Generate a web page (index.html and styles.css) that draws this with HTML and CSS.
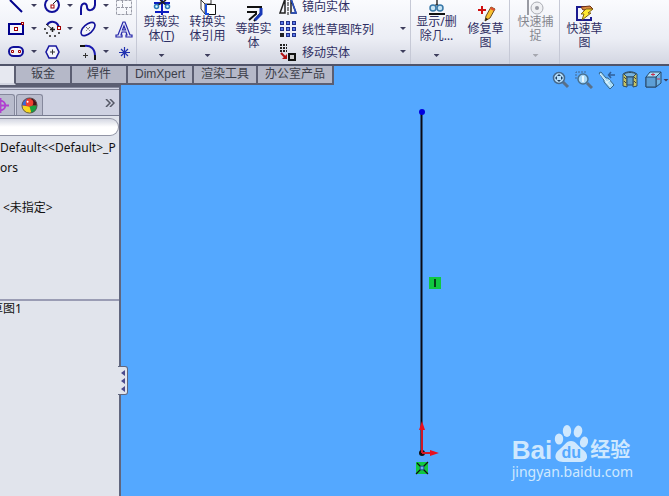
FILE: index.html
```html
<!DOCTYPE html>
<html lang="zh-CN">
<head>
    <meta charset="UTF-8">
    <meta name="viewport" content="width=device-width, initial-scale=1.0">
    <title>草图1</title>
    <link rel="stylesheet" href="styles.css">
</head>
<body>

    <!-- Sketch ribbon -->
    <header class="ribbon">
        <div class="group entities">
            <button class="tool" aria-label="Line"><svg viewBox="0 0 18 18"><path d="M3 3L15 15" stroke="#00008b" stroke-width="2"/></svg><i class="arrow"></i></button>
            <button class="tool" aria-label="Circle"><svg viewBox="0 0 18 18"><circle cx="9" cy="8" r="7" fill="none" stroke="#10109a" stroke-width="2"/><path d="M10 7L14 3" stroke="#222"/><rect x="8" y="8" width="3" height="3" fill="#fff" stroke="#a00000"/></svg><i class="arrow"></i></button>
            <button class="tool" aria-label="Spline"><svg viewBox="0 0 18 18"><path d="M2 18V12C2 5 8 5 8 10S15 14 16 8V1" fill="none" stroke="#10109a" stroke-width="2"/></svg><i class="arrow"></i></button>
            <button class="tool" aria-label="Plane"><svg viewBox="0 0 18 18"><path d="M1.500 3.500H16.500V17.500H1.500ZM2 10.500H16M7.500 3V10M11.500 10V17" fill="none" stroke="#9a9ca8" stroke-dasharray="3 1"/></svg></button>

            <button class="tool" aria-label="Rectangle"><svg viewBox="0 0 18 18"><rect x="2" y="4" width="14" height="10" fill="#f4f5fb" stroke="#00008b" stroke-width="2"/><rect x="7.500" y="7.500" width="3" height="3" fill="#fff" stroke="#a00000"/><rect x="14.500" y="2.500" width="2" height="2" fill="#fff" stroke="#a00000"/></svg><i class="arrow"></i></button>
            <button class="tool" aria-label="Arc"><svg viewBox="0 0 18 18"><path d="M4 5C7 0 15 1 16 8" fill="none" stroke="#10109a" stroke-width="2"/><path d="M3 4L9 9" stroke="#222"/><path d="M2 8V10M3 13H5M6 16H8M11 16H13M15 13H17M7 9.500H12M9.500 7V12" stroke="#222" stroke-width="1.500"/><rect x="14.500" y="6.500" width="3" height="3" fill="#fff" stroke="#a00000"/></svg><i class="arrow"></i></button>
            <button class="tool" aria-label="Ellipse"><svg viewBox="0 0 18 18"><ellipse cx="9" cy="9" rx="8.500" ry="4.500" transform="rotate(-42 9 9)" fill="#f4f5fb" stroke="#10109a" stroke-width="1.600"/><path d="M7 7L11 11M11 7L7 11" stroke="#333" stroke-dasharray="1 1"/></svg><i class="arrow"></i></button>
            <button class="tool" aria-label="Text"><svg viewBox="0 0 18 18"><path d="M8 2H10L15 15H17V17H11V15H12L11 12H7L6 15H7V17H1V15H3ZM9 6L7.500 10H10.500Z" fill="#e4e8f8" stroke="#2424a8" stroke-width="1.200" fill-rule="evenodd"/></svg></button>

            <button class="tool" aria-label="Slot"><svg viewBox="0 0 18 18"><rect x="2" y="4" width="14" height="9" rx="4.500" fill="#f4f5fb" stroke="#10109a" stroke-width="2"/><path d="M4.500 7.500h2v2h-2zM11.500 7.500h2v2h-2z" fill="#fff" stroke="#a00000"/></svg><i class="arrow"></i></button>
            <button class="tool" aria-label="Polygon"><svg viewBox="0 0 18 18"><path d="M6 3H13L16 9L13 15H6L3 9Z" fill="#f4f5fb" stroke="#1a1aa0" stroke-width="1.600"/><path d="M7 9H12M9.500 6.500V11.500" stroke="#333"/></svg></button>
            <button class="tool" aria-label="Fillet"><svg viewBox="0 0 18 18"><path d="M5 3C12 2 16 6 16 13" fill="none" stroke="#1a1ab0" stroke-width="2"/><path d="M1 3H6M16 12V17" stroke="#111" stroke-width="2"/><path d="M4 12.500H9M6.500 10V15" stroke="#333"/></svg><i class="arrow"></i></button>
            <button class="tool" aria-label="Point"><svg viewBox="0 0 18 18"><path d="M9.500 4V15M4 9.500H15M6 6L13 13M13 6L6 13" stroke="#2030b0" stroke-width="1.200"/></svg></button>
        </div>

        <div class="group plain">
            <button class="large">
                <svg class="short" viewBox="0 0 22 15"><path d="M3 3H19M4 12H18M11 0V15" stroke="#0a1ac0" stroke-width="2"/><path d="M7 5L15 0M16 6L9 0" stroke="#222" stroke-width="1.500"/><circle cx="5.500" cy="6.500" r="2" fill="#dff" stroke="#2878b8" stroke-width="1.500"/><circle cx="16.500" cy="6.500" r="2" fill="#dff" stroke="#2878b8" stroke-width="1.500"/></svg>
                <span>剪裁实<br>体(<u>T</u>)</span><i class="arrow"></i>
            </button>
            <button class="large">
                <svg class="short" viewBox="0 0 22 15"><path d="M4 0V9L8 14V4L4 0M8 4H14V0" fill="#fff" stroke="#333"/><path d="M8.500 4.500H18.500V14.500H8.500Z" fill="#fff" stroke="#111"/><path d="M9 4V14H12" fill="none" stroke="#1a50e0" stroke-width="2"/></svg>
                <span>转换实<br>体引用</span><i class="arrow"></i>
            </button>
            <button class="large">
                <svg class="tall" viewBox="0 0 22 22"><path d="M4 7H18V13L11 21" fill="none" stroke="#111" stroke-width="2"/><path d="M4 12H13V14L6 20" fill="none" stroke="#111" stroke-width="2"/><path d="M18 8V14L12 20" fill="none" stroke="#1838b8" stroke-width="3"/></svg>
                <span>等距实<br>体</span>
            </button>
        </div>

        <div class="group list">
            <button class="row"><svg viewBox="0 0 18 18"><path d="M6 2L1 16H6ZM12 2L17 16H12Z" fill="#f4f5fb" stroke="#222" stroke-width="1.500"/><path d="M12 2L17 16H12" fill="none" stroke="#2850c8" stroke-width="1.500"/><path d="M9 0V18" stroke="#111" stroke-dasharray="4 1"/></svg><span>镜向实体</span></button>
            <button class="row"><svg viewBox="0 0 18 18"><path d="M1 1h4v4H1zM7 1h4v4H7zM13 1h4v4h-4zM1 7h4v4H1zM7 7h4v4H7zM13 7h4v4h-4zM7 13h4v4H7zM13 13h4v4h-4z" fill="#20308c"/><path d="M1 13h4v4H1z" fill="#222"/><path d="M2 2h2v2H2zM8 2h2v2H8zM14 2h2v2h-2zM2 8h2v2H2zM8 8h2v2H8zM14 8h2v2h-2zM8 14h2v2H8zM14 14h2v2h-2z" fill="#5878e8"/></svg><span>线性草图阵列</span><i class="arrow"></i></button>
            <button class="row"><svg viewBox="0 0 18 18"><path d="M1 2H8M1 5H8M1 8H8" stroke="#222" stroke-width="2" stroke-dasharray="2 1"/><rect x="10" y="11" width="6" height="6" fill="#ccc" stroke="#111" stroke-width="2"/><path d="M2 10L6 14" stroke="#b01010" stroke-width="2"/><path d="M8 11V16H3Z" fill="#b01010"/></svg><span>移动实体</span><i class="arrow"></i></button>
        </div>

        <div class="group spaced">
            <button class="large">
                <svg class="short" viewBox="0 0 22 15"><path d="M11 0V4L15 11M11 4L7 8" fill="none" stroke="#333" stroke-width="1.500"/><circle cx="7" cy="8" r="3" fill="#c8e4f4" stroke="#3878a8" stroke-width="1.500"/><circle cx="14" cy="8" r="3" fill="#c8e4f4" stroke="#3878a8" stroke-width="1.500"/><path d="M3 14H19" stroke="#111" stroke-width="2"/></svg>
                <span>显示/删<br>除几…</span><i class="arrow"></i>
            </button>
            <button class="large">
                <svg class="tall" viewBox="0 0 22 22"><path d="M3 10H11M7 6V14" stroke="#d01010" stroke-width="2"/><path d="M10 21L11 16L16 7L20 9L15 18Z" fill="#f8c030" stroke="#6a4a20"/><path d="M16 7L20 9L19 11L15 9Z" fill="#e05030"/><path d="M10 21L11 18L13 19Z" fill="#111"/></svg>
                <span>修复草<br>图</span>
            </button>
        </div>

        <div class="group spaced">
            <button class="large" disabled>
                <svg class="short" viewBox="0 0 22 15"><path d="M3 0V15" stroke="#999ba3" stroke-width="2"/><circle cx="12" cy="8" r="6" fill="#f0f1f4" stroke="#aaacb3"/><circle cx="12" cy="8" r="2" fill="#999ba3"/></svg>
                <span>快速捕<br>捉</span><i class="arrow"></i>
            </button>
        </div>

        <div class="group plain">
            <button class="large">
                <svg class="tall" viewBox="0 0 22 22"><path d="M11 7H3V20H17V17" fill="none" stroke="#1a1a90" stroke-width="2"/><path d="M7 7L16 6L19 9L9 10Z" fill="#d88840" stroke="#703010"/><path d="M12 9H19L14 13H17L8 20L10 14H7Z" fill="#ffe830" stroke="#806010"/></svg>
                <span>快速草<br>图</span>
            </button>
        </div>
    </header>

    <nav class="tabs">
        <a class="tab current" href="#" aria-label="Sketch"></a>
        <a class="tab" href="#">钣金</a>
        <a class="tab" href="#">焊件</a>
        <a class="tab" href="#">DimXpert</a>
        <a class="tab" href="#">渲染工具</a>
        <a class="tab" href="#">办公室产品</a>

        <!-- Heads-up view tools -->
        <div class="view-tools">
            <button aria-label="Zoom to fit"><svg viewBox="0 0 18 18"><path d="M11 11L16 16" stroke="#5a7088" stroke-width="3"/><circle cx="7" cy="7" r="5.500" fill="#b8e0fc" stroke="#46698c" stroke-width="1.500"/><path d="M7 3L9 5H5ZM7 11L9 9H5ZM3 7L5 5V9ZM11 7L9 5V9Z" fill="#1d3d60"/></svg></button>
            <button aria-label="Zoom to area"><svg viewBox="0 0 18 18"><path d="M1 8V1H12" fill="none" stroke="#46698c" stroke-dasharray="2 1"/><path d="M12 12L17 17" stroke="#5a7088" stroke-width="3"/><circle cx="8" cy="8" r="5" fill="#a8d8f8" stroke="#47708f" stroke-width="1.500"/><path d="M8 5V11" stroke="#e8f8ff" stroke-width="2"/></svg></button>
            <button aria-label="Previous view"><svg viewBox="0 0 18 18"><path d="M1 2L3 1L8 7L10 7L16 14L12 18L6 11V9Z" fill="#a8dcf8" stroke="#356488"/><path d="M8 12L12 9M2 3L12 15" stroke="#e8f8ff"/><path d="M11 4H17M13 1L10.500 4L13 7" fill="none" stroke="#315f98" stroke-width="1.500"/></svg></button>
            <button aria-label="Section view"><svg viewBox="0 0 18 18"><path d="M2 3C6 0 12 0 16 3V15L12 16V6H6V16L2 15Z" fill="#c8c460" stroke="#284868"/><path d="M3 3C6 1 12 1 15 3L12 6H6Z" fill="#78b4e0" stroke="#284868"/><path d="M6 6H12V14H6Z" fill="#5c9ccc" stroke="#284868"/><path d="M3 6L5 8M3 10L5 12M13 6L15 8M13 10L15 12" stroke="#444"/></svg></button>
            <button aria-label="View orientation"><svg viewBox="0 0 18 18"><path d="M2 6L6 1H17L12 6V16H2Z" fill="#a8dcf8" stroke="#284868"/><path d="M12 6L17 1V12L12 16Z" fill="#70b4e4" stroke="#284868"/><path d="M2 6H12V16H2Z" fill="#5d9fd6" stroke="#284868"/><path d="M7 3.500H11M9 2V5M13 8H16" stroke="#c83050"/></svg></button>
            <i class="arrow"></i>
        </div>
    </nav>

    <main class="workspace">
        <aside class="panel">
            <div class="panel-tabs">
                <button class="panel-tab first" aria-label="DimXpert manager"><svg viewBox="0 0 18 18"><circle cx="9" cy="9" r="5" fill="none" stroke="#b040d0" stroke-width="2"/><path d="M0 9H18M9 1V17" stroke="#b040d0" stroke-width="2"/></svg></button>
                <button class="panel-tab" aria-label="Display manager"><svg viewBox="0 0 18 18"><circle cx="9" cy="9" r="8" fill="#e02020"/><path d="M1 9A8 8 0 0 1 6 2L9 9Z" fill="#3868d8"/><path d="M9 9L11 1A8 8 0 0 1 17 9Z" fill="#4a1018"/><path d="M17 9A8 8 0 0 1 11 17L8 9Z" fill="#18a040"/><path d="M1 9A8 8 0 0 0 11 17L9 10Z" fill="#f8d820"/><circle cx="9" cy="6" r="4" fill="#f04030"/><circle cx="7" cy="5" r="1" fill="#fff"/><circle cx="9" cy="9" r="8" fill="none" stroke="#555"/></svg></button>
                <button class="more" aria-label="More"><svg viewBox="0 0 10 8"><path d="M1 0L5 4L1 8M5 0L9 4L5 8" fill="none" stroke="#555866" stroke-width="1.500"/></svg></button>
            </div>
            <input class="filter" type="text" aria-label="Filter">
            <ul class="tree">
                <li>Default&lt;&lt;Default&gt;_P</li>
                <li>ors</li>
                <li></li>
                <li class="material">&lt;未指定&gt;</li>
            </ul>
            <div class="history"><span>草图1</span></div>
            <button class="handle" aria-label="Collapse panel"><svg viewBox="0 0 4 24"><path d="M4 1V7L0 4ZM4 9V15L0 12ZM4 17V23L0 20Z" fill="#4b4b8c"/></svg></button>
        </aside>

        <section class="canvas">
            <svg class="sketch" viewBox="0 0 50 380">
                <path d="M20.500 16V357" stroke="#0a0a14" stroke-width="2"/>
                <circle cx="21" cy="16" r="3" fill="#0000e0"/>
                <rect x="28" y="181" width="12" height="12" fill="#10c840"/>
                <path d="M34 183V191" stroke="#064018" stroke-width="2"/>
                <circle cx="21" cy="357" r="3" fill="#111"/>
                <path d="M21 357V330M21 357H31" stroke="#d01828" stroke-width="2"/>
                <path d="M21 325L24 334H18ZM38 357L29 354V360Z" fill="#e81020"/>
                <rect x="15" y="366" width="12" height="12" fill="#10c840"/>
                <path d="M15 378L27 366M16 367L27 378" stroke="#111" stroke-width="1.200"/>
                <circle cx="21" cy="372" r="2" fill="#70b0f0" stroke="#2050a0"/>
            </svg>

            <div class="watermark">
                <div class="brand">
                    <span class="bai">Bai</span>
                    <span class="paw">
                        <svg viewBox="0 0 34 37"><g fill="#cfe8fe"><ellipse cx="5" cy="14" rx="4.200" ry="5.500"/><ellipse cx="13" cy="6" rx="4.200" ry="6"/><ellipse cx="24" cy="6.500" rx="4.200" ry="6" transform="rotate(12 24 6.500)"/><ellipse cx="30" cy="17" rx="4" ry="5.500" transform="rotate(15 30 17)"/><path d="M17 16C22 16 24 21 28 24C36 29 34 37 26 37H9C0 37 -1 29 6 24C10 21 12 16 17 16Z"/></g></svg>
                        <b>du</b>
                    </span>
                    <span class="jingyan">经验</span>
                </div>
                <div class="site">jingyan.baidu.com</div>
            </div>
        </section>
    </main>

</body>
</html>
```

FILE: styles.css
```css
* {
    box-sizing: border-box;
}

body {
    display: flex;
    flex-direction: column;
    height: 100vh;
    margin: 0;
    overflow: hidden;
    background-color: #54a8ff;
    color: #111;
    font-family: "Noto Sans", "Noto Sans CJK SC", sans-serif;
    font-size: 12px;
}

button {
    margin: 0;
    padding: 0;
    border: 0;
    background: none;
    color: inherit;
    font: inherit;
}

svg {
    display: block;
    flex: none;
}

.arrow {
    flex: none;
    width: 6px;
    height: 3px;
    background-color: #3d3d5c;
    clip-path: polygon(0 0, 100% 0, 50% 100%);
}

/* Ribbon */
.ribbon {
    display: flex;
    flex: none;
    height: 66px;
    overflow: hidden;
    border-bottom: 2px solid #50546a;
    background: linear-gradient(#fafbfe, #eceef5 60%, #d3d6e2);
    color: #2e2e62;
}

.group {
    display: flex;
    flex: none;
    gap: 1px;
    padding: 0 1px 0 2px;
    border-right: 1px solid #c6c9d6;
}

.group.plain {
    border-right: 0;
}

.group.spaced {
    gap: 4px;
    padding-left: 3px;
}

.entities {
    display: grid;
    grid-template-columns: 36px 36px 36px 18px;
    grid-auto-rows: 23px;
    gap: 0;
    margin-top: -6px;
    padding: 0 3px 0 7px;
}

.tool {
    display: flex;
    align-items: center;
    gap: 6px;
}

.tool svg,
.row svg {
    width: 18px;
    height: 18px;
}

.large {
    display: flex;
    flex-direction: column;
    align-items: center;
    width: 45px;
    line-height: 14px;
    white-space: nowrap;
}

.large:disabled {
    color: #85878f;
}

.large:disabled .arrow {
    background-color: #a5a7af;
}

.large svg {
    width: 22px;
}

.short {
    height: 15px;
}

.tall {
    height: 22px;
}

.large .arrow {
    margin-top: 11px;
}

.list {
    flex-direction: column;
    gap: 0;
    width: 134px;
    margin-top: -6px;
    padding: 0 4px 0 2px;
}

.row {
    display: flex;
    align-items: center;
    gap: 5px;
    height: 23px;
}

.row .arrow {
    margin-left: auto;
}

/* Command tabs */
.tabs {
    display: flex;
    flex: none;
    height: 19px;
}

.tab {
    min-width: 56px;
    padding: 0 7px;
    border-right: 2px solid #5b5e72;
    border-bottom: 2px solid #5b5e72;
    background-color: #b5b8c8;
    color: #3c3e4a;
    font-family: "Liberation Sans", "Noto Sans CJK SC", sans-serif;
    line-height: 17px;
    text-align: center;
    text-decoration: none;
    white-space: nowrap;
}

.tab.current {
    min-width: 16px;
    padding: 0;
    border-bottom-color: #d3d6e2;
    background-color: #e6e8f0;
}

.view-tools {
    display: flex;
    align-items: center;
    gap: 5px;
    height: 18px;
    margin: 5px 0 0 auto;
    z-index: 1;
}

.view-tools svg {
    width: 18px;
    height: 18px;
}

.view-tools .arrow {
    margin-left: -4px;
}

/* Feature manager */
.workspace {
    display: flex;
    flex: 1;
    min-height: 0;
}

.panel {
    position: relative;
    display: flex;
    flex: none;
    flex-direction: column;
    width: 121px;
    border-top: 2px solid #5b5e72;
    border-right: 2px solid #60667e;
    background-color: #e1e4ec;
}

.panel-tabs {
    display: flex;
    align-items: flex-end;
    flex: none;
    gap: 1px;
    height: 29px;
    padding-right: 4px;
    border-top: 3px double #85889c;
    border-bottom: 1px solid #777b90;
    background-color: #cfd2e2;
}

.panel-tab {
    display: flex;
    align-items: center;
    justify-content: center;
    width: 27px;
    height: 21px;
    border: 1px solid #85889c;
    border-bottom: 0;
    border-radius: 3px 3px 0 0;
    background-color: #b9bccd;
}

.panel-tab.first {
    justify-content: flex-start;
    width: 15px;
    overflow: hidden;
    border-left: 0;
    border-top-left-radius: 0;
}

.panel-tab.first svg {
    margin-left: -8px;
}

.panel-tab svg {
    width: 17px;
    height: 17px;
}

.more {
    align-self: center;
    margin-left: auto;
}

.more svg {
    width: 10px;
    height: 8px;
}

.filter {
    flex: none;
    width: 100%;
    height: 18px;
    margin: 2px 0;
    padding: 0 8px;
    border: 1px solid #9295a5;
    border-left: 0;
    border-radius: 0 9px 9px 0;
    background: linear-gradient(#d4d7e2, #fff 50%);
}

.tree {
    height: 163px;
    margin: 0;
    padding: 0;
    overflow: hidden;
    border-bottom: 2px solid #9a9cb4;
    list-style: none;
    line-height: 20px;
    white-space: nowrap;
}

.tree li {
    height: 20px;
}

.tree .material {
    padding-left: 3px;
}

.history {
    overflow: hidden;
    line-height: 16px;
}

.history span {
    margin-left: -9px;
}

.handle {
    position: absolute;
    top: 279px;
    right: -9px;
    display: flex;
    align-items: center;
    justify-content: flex-end;
    width: 10px;
    height: 29px;
    padding-right: 2px;
    border: 1px solid #60667e;
    border-left: 0;
    border-radius: 0 3px 3px 0;
    background-color: #e1e4ec;
    z-index: 1;
}

.handle svg {
    width: 4px;
    height: 24px;
}

/* Drawing area */
.canvas {
    position: relative;
    flex: 1;
    border-top: 1px solid #54a8ff;
}

.sketch {
    position: absolute;
    top: 10px;
    left: 280px;
    width: 50px;
    height: 380px;
}

.watermark {
    position: absolute;
    right: 36px;
    bottom: 14px;
    color: #cfe8fe;
}

.brand {
    display: flex;
    align-items: flex-end;
    gap: 2px;
    line-height: 24px;
}

.bai {
    font-family: "Liberation Sans", Arial, sans-serif;
    font-size: 26px;
    font-weight: bold;
}

.paw {
    position: relative;
}

.paw svg {
    width: 34px;
    height: 37px;
}

.paw b {
    position: absolute;
    right: 0;
    bottom: 1px;
    left: 0;
    color: #54a8ff;
    font-family: "Liberation Sans", Arial, sans-serif;
    font-size: 16px;
    line-height: 16px;
    text-align: center;
}

.jingyan {
    font-size: 20px;
    font-weight: bold;
}

.site {
    font-size: 14px;
    line-height: 20px;
}
```
